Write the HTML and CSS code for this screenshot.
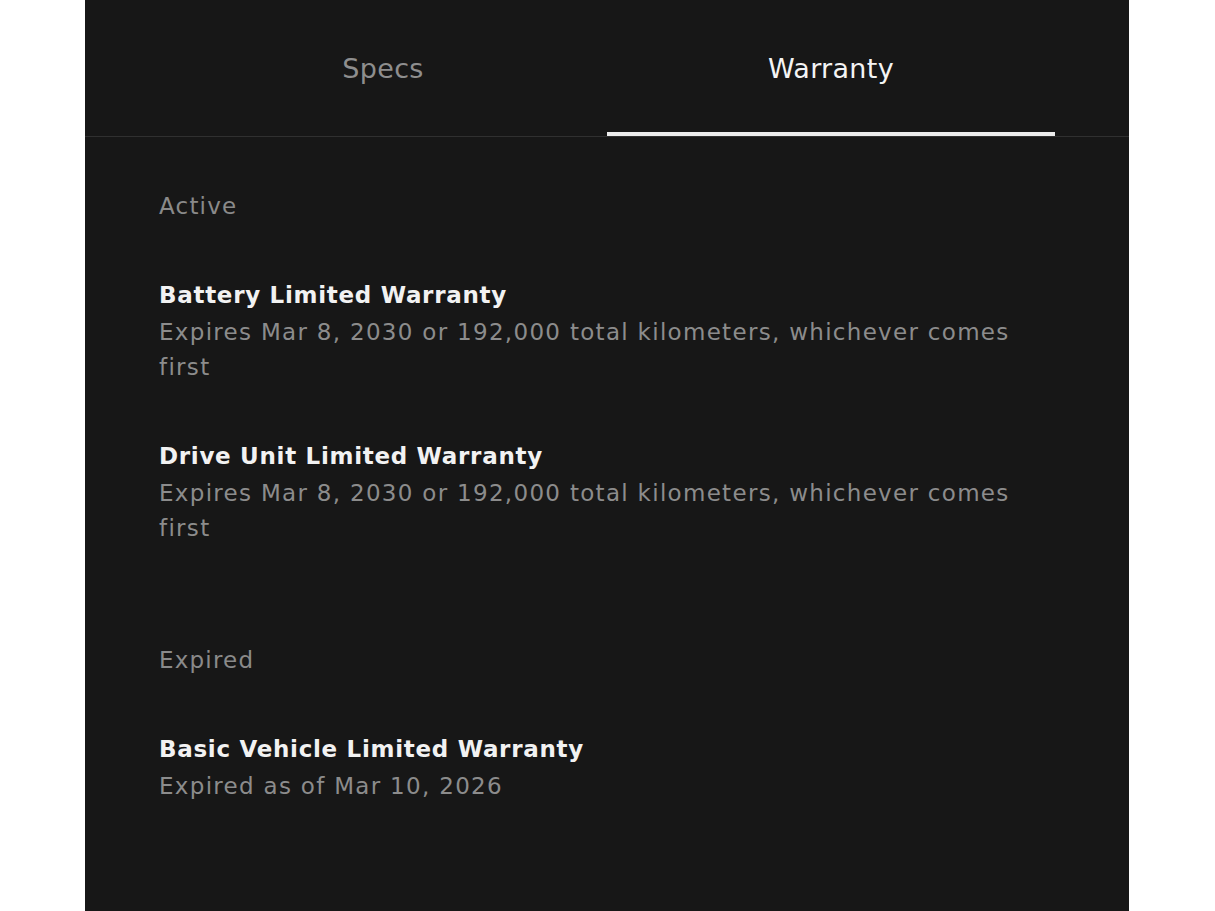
FILE: index.html
```html
<!DOCTYPE html>
<html lang="en">
<head>
<meta charset="utf-8">
<title>Warranty</title>
<link rel="stylesheet" href="styles.css">
</head>
<body>
<main class="panel">
  <nav class="tabs">
    <div class="tab">Specs</div>
    <div class="tab tab-active">Warranty</div>
  </nav>
  <div class="content">
    <section class="section">
      <h2 class="section-label">Active</h2>
      <div class="item">
        <h3 class="item-title">Battery Limited Warranty</h3>
        <p class="item-desc">Expires Mar 8, 2030 or 192,000 total kilometers, whichever comes first</p>
      </div>
      <div class="item">
        <h3 class="item-title">Drive Unit Limited Warranty</h3>
        <p class="item-desc">Expires Mar 8, 2030 or 192,000 total kilometers, whichever comes first</p>
      </div>
    </section>
    <section class="section">
      <h2 class="section-label">Expired</h2>
      <div class="item">
        <h3 class="item-title">Basic Vehicle Limited Warranty</h3>
        <p class="item-desc">Expired as of Mar 10, 2026</p>
      </div>
    </section>
  </div>
</main>
</body>
</html>
```

FILE: styles.css
```css
html, body {
  margin: 0;
  padding: 0;
  background: #ffffff;
}

body {
  font-family: "DejaVu Sans", "Liberation Sans", sans-serif;
}

.panel {
  margin-left: 85px;
  width: 1044px;
  min-height: 911px;
  background: #171717;
  box-sizing: border-box;
}

.tabs {
  display: flex;
  padding: 0 74px;
  height: 137px;
  box-sizing: border-box;
  border-bottom: 1px solid #303030;
}

.tab {
  flex: 1;
  display: flex;
  align-items: center;
  justify-content: center;
  padding-top: 4px;
  font-size: 27px;
  font-weight: 400;
  letter-spacing: 0.3px;
  color: #8e8e8e;
  border-bottom: 4px solid transparent;
}

.tab-active {
  color: #f4f4f4;
  border-bottom-color: #ececec;
}

.content {
  display: flex;
  flex-direction: column;
  gap: 97px;
  padding: 52px 74px 0;
}

.section {
  display: flex;
  flex-direction: column;
  gap: 53px;
}

.section-label {
  margin: 0;
  font-size: 23px;
  line-height: 35px;
  font-weight: 400;
  letter-spacing: 1.2px;
  color: #8a8a8a;
}

.item {
  display: flex;
  flex-direction: column;
}

.item-title {
  margin: 0 0 2px;
  font-size: 23px;
  line-height: 36px;
  font-weight: 700;
  letter-spacing: 0.7px;
  color: #f2f2f2;
}

.item-desc {
  margin: 0;
  font-size: 23px;
  line-height: 35px;
  font-weight: 400;
  letter-spacing: 1.3px;
  color: #8c8c8c;
}
```
